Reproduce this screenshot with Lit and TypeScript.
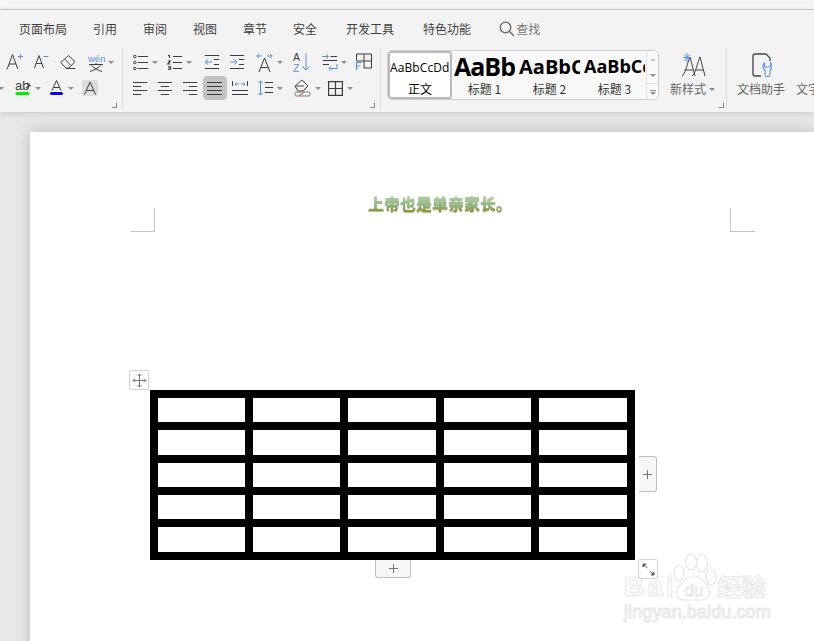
import { LitElement, css, html, svg } from 'lit'
import { customElement } from 'lit/decorators.js'

const BLUE = '#5b92dc'
const INK = '#3c3c3c'

// small helper, every icon is drawn on its own pixel box
const ico = (w: number, h: number, body: unknown) => html`<svg width=${w} height=${h} viewBox="0 0 ${w} ${h}" fill="none" stroke=${INK} stroke-width="1">${body}</svg>`

const lines = (rows: [number, number, number][]) => rows.map(([x1, x2, y]) => svg`<path d="M${x1} ${y}.5H${x2}"/>`)

const icons: Record<string, unknown> = {
	aPlus: ico(17, 20, svg`<path d="M.2 17 5.500 2.500 10.800 17M2 12h7"/><path stroke=${BLUE} d="M11 4.500h5M13.500 2v5"/>`),
	aMinus: ico(15, 20, svg`<path d="M.5 16 5 3.500 9.500 16M2 11.500h6"/><path stroke=${BLUE} d="M9.500 4.500h5"/>`),
	eraser: ico(16, 18, svg`<path stroke="#444" d="M.8 9.500 8.500 2.500l6.500 6-6 6.500H6zM4.500 6l6.500 6.500M6 15.500h9"/>`),
	wen: ico(16, 22, svg`<text x="0" y="11" font-size="9.500" font-family="Liberation Sans" fill=${BLUE} stroke="none">wén</text><path d="M1 13.500h14M8 12v1.500M3.500 14.500c3 3 7 5 10.500 6M12.500 14.500c-3 3-7 5-10.500 6"/>`),
	ab: ico(16, 19, svg`<text x="0" y="11" font-size="13" font-family="Liberation Sans" fill=${INK} stroke="none">ab</text><path stroke-width="1.200" d="m11 9 4-2.500-3-2.500"/><path stroke="#00ee00" stroke-width="3" stroke-linecap="round" d="M2 14.500h11"/>`),
	aBlue: ico(15, 20, svg`<path d="M3 12.500 7.500 2.500l4.500 10M4.500 9.500h6"/><path stroke="#0000e0" stroke-width="3" stroke-linecap="round" d="M2.500 15.500h10"/>`),
	aBox: ico(16, 16, svg`<rect width="16" height="16" rx="2" fill="#dcdcdc" stroke="none"/><path stroke="#444" d="M2.500 14.500 8 2l5.500 12.500M4.300 10.500h7.400"/>`),
	bullets: ico(15, 16, svg`<circle cx="1.800" cy="2.500" r="1.300"/><circle cx="1.800" cy="8.500" r="1.300"/><circle cx="1.800" cy="14.500" r="1.300"/>${lines([[5, 15, 2], [5, 15, 8], [5, 15, 14]])}`),
	numbered: ico(15, 16, svg`<path stroke-width="1.200" d="M1 1.500h1.500v2.500M.8 7h2.400l-2.400 3h2.600M1 12.800h2.500v2.400H1"/>${lines([[6, 15, 2], [6, 15, 8], [6, 15, 14]])}`),
	outdent: ico(15, 14, svg`<path stroke=${BLUE} d="M8 7H1m3-2.500L1.300 7 4 9.500"/>${lines([[1, 15, 0], [10, 15, 4], [10, 15, 9], [1, 15, 13]])}`),
	indent: ico(15, 14, svg`<path stroke=${BLUE} d="M1 7h7M5.500 4.500 8 7 5.500 9.500"/>${lines([[1, 15, 0], [10, 15, 4], [10, 15, 9], [1, 15, 13]])}`),
	aWide: ico(17, 21, svg`<path d="M3 20 8.500 6 14 20M5 15.500h7"/><path stroke=${BLUE} d="M1 4h5M3 2 .8 4 3 6M11 4h5M14 2l2.200 2L14 6"/>`),
	sort: ico(17, 20, svg`<text x="0" y="9" font-size="10.500" font-family="Liberation Sans" fill=${INK} stroke="none">A</text><text x="0" y="20" font-size="10.500" font-family="Liberation Sans" fill=${BLUE} stroke="none">Z</text><path stroke=${BLUE} d="M13 1v17m-3.500-3.500L13 18l3.500-3.500"/>`),
	lineBreak: ico(15, 18, svg`<path stroke=${BLUE} d="M0 3.500h6M4.500 1.500l2 2-2 2M15 11v4.500H7M9 13.500l-2 2 2 2"/><path d="M8.500 3.500H15M1 7.500h14M1 11.500h6"/>`),
	tableText: ico(17, 18, svg`<path d="M1.500 7.500v-6.500h15v14H9M9 1v14M1.500 8h15"/><path stroke=${BLUE} stroke-width="1.200" d="M1.500 17V9.500h5M1.500 13h4"/>`),
	left: ico(15, 14, svg`${lines([[1, 15, 1], [1, 9, 5], [1, 15, 9], [1, 9, 13]])}`),
	center: ico(15, 14, svg`${lines([[1, 15, 1], [4, 12, 5], [1, 15, 9], [4, 12, 13]])}`),
	right: ico(15, 14, svg`${lines([[1, 15, 1], [7, 15, 5], [1, 15, 9], [7, 15, 13]])}`),
	justify: ico(16, 14, svg`${lines([[0, 15, 1], [0, 15, 5], [0, 15, 9], [0, 15, 13]])}`),
	distribute: ico(16, 14, svg`<path d="M.5 0v5M15.500 0v5M0 13.500h16M0 9.500h16"/><path stroke=${BLUE} d="M3 3h4M4.500 1.500 3 3l1.500 1.500M9 3h4M11.500 1.500 13 3l-1.500 1.500"/>`),
	spacing: ico(15, 16, svg`<path stroke=${BLUE} d="M2.500 1v14M.5 3l2-2 2 2M.5 13l2 2 2-2"/>${lines([[7, 15, 2], [7, 15, 7], [7, 15, 12]])}`),
	fill: ico(17, 18, svg`<path stroke="#444" d="m1 7 7-6 6 6-5 5H4zM1 7h9"/><rect x="1" y="13" width="15" height="4" rx="1.500" stroke="#777"/><path stroke="#e05555" d="m5 16.500 5-3"/>`),
	borders: ico(15, 15, svg`<path stroke-width="1.200" d="M.6.6h13.800v13.800H.6zM7.500.6v13.800M.6 7.500h13.800"/>`),
}

const Row1 = [
	[[7, 'aPlus', 17], [10, 'aMinus', 15], [11, 'eraser', 16], [12, 'wen', 16, 1]],
	[[10, 'bullets', 15, 1], [9, 'numbered', 15, 1], [12, 'outdent', 15], [10, 'indent', 15], [12, 'aWide', 17, 1], [10, 'sort', 17], [12, 'lineBreak', 15, 1], [8, 'tableText', 17]],
]
const Row2 = [
	[[11, 'ab', 16, 1], [8, 'aBlue', 15, 1], [8, 'aBox', 16]],
	[[9, 'left', 15], [10, 'center', 15], [10, 'right', 15], [6, 'justify', 16, 2], [5, 'distribute', 16], [10, 'spacing', 15, 1], [11, 'fill', 17, 1], [7, 'borders', 15, 1]],
]

const tool = (t: (string | number)[]) => html`<span class="tool ${t[3] === 2 ? 'on' : ''}" style="margin-left:${t[0]}px">
	${icons[t[1] as string]}${t[3] === 1 ? html`<i class="arrow"></i>` : ''}
</span>`

const plus = html`<svg width="9" height="9" viewBox="0 0 9 9" stroke="#777" fill="none"><path d="M4.500 0v9M0 4.500h9"/></svg>`

const tabs = ['页面布局', '引用', '审阅', '视图', '章节', '安全', '开发工具', '特色功能']

@customElement('app-root')
export class AppRoot extends LitElement {
	render() {
		return html`
		<div class="top"></div>
		<div class="ribbon">
			<nav class="tabs">
				${tabs.map((t, i) => html`<span class=${i > 5 ? 'tab wide' : 'tab'}>${t}</span>`)}
				<span class="find">
					<svg width="16" height="16" viewBox="0 0 16 16" fill="none" stroke="#666" stroke-width="1.300"><circle cx="6.500" cy="6.500" r="5.300"/><path d="m10.500 10.500 4.500 4.500"/></svg>
					查找
				</span>
			</nav>
			<div class="tools">
				<section class="group one">
					<div class="row">${Row1[0].map(tool)}</div>
					<div class="row"><i class="arrow first"></i>${Row2[0].map(tool)}</div>
					<i class="launch"></i>
				</section>
				<section class="group two">
					<div class="row">${Row1[1].map(tool)}</div>
					<div class="row">${Row2[1].map(tool)}</div>
					<i class="launch"></i>
				</section>
				<div class="gallery">
					<div class="style sel"><b class="p0">AaBbCcDd</b><span class="body">正文</span></div>
					<div class="style s1"><b class="p1">AaBb</b><span>标题 1</span></div>
					<div class="style s2"><b class="p2">AaBbC</b><span>标题 2</span></div>
					<div class="style s3"><b class="p3">AaBbCc</b><span>标题 3</span></div>
					<div class="scroll">
						<span class="up"></span><span class="down"></span><span class="more"></span>
					</div>
				</div>
				<section class="big newstyle">
					<svg width="28" height="26" viewBox="0 0 28 26" fill="none" stroke="#444">
						<path d="M3 26c3-1 5-12 8-19l5 19M5.500 20h8.500M13 26c3-1 5-12 8-19l5 19M16 20h8.500"/>
						<path stroke=${BLUE} d="M8 3v9M4 7.500h8M5 4.500l6 6M11 4.500l-6 6"/>
					</svg>
					<span>新样式<i class="arrow tiny"></i></span>
					<i class="launch"></i>
				</section>
				<section class="big helper">
					<svg width="22" height="24" viewBox="0 0 22 24" fill="none" stroke="#444" stroke-width="1.300">
						<path d="M11 23H5q-2 0-2-2V3q0-2 2-2h11l4 4v3"/>
						<path stroke=${BLUE} stroke-width="1.100" d="M14.500 10c-2 1-2.500 5 .5 7v5c0 2 5 2 5 0v-5c3-2 2.500-6 .5-7v4h-6z"/>
					</svg>
					<span>文档助手</span>
				</section>
				<span class="cut">文字</span>
			</div>
		</div>
		<main class="canvas">
			<article class="paper">
				<h1>上帝也是单亲家长。</h1>
				<i class="mark ml"></i><i class="mark mr"></i>
				<span class="handle move">
					<svg width="15" height="15" viewBox="0 0 15 15" fill="none" stroke="#777"><path d="M7.500 1v13M1 7.500h13M5.500 3l2-2 2 2M5.500 12l2 2 2-2M3 5.500l-2 2 2 2M12 5.500l2 2-2 2"/></svg>
				</span>
				<div class="table">
					${Array.from({ length: 25 }, () => html`<div class="cell"></div>`)}
				</div>
				<span class="add side">${plus}</span>
				<span class="add under">${plus}</span>
				<span class="handle resize">
					<svg width="15" height="15" viewBox="0 0 15 15" fill="#555" stroke="#666"><path d="M2.500 2.500l4 3.500M2 2h3L2 5zM12.500 12.500 8.500 9M13 13h-3l3-3z"/></svg>
				</span>
				<div class="mark-wm">
					<svg class="paw" width="44" height="48" viewBox="0 0 44 48" fill="#fff" stroke="#e4e4e4" stroke-width="1.100">
						<ellipse cx="6" cy="20" rx="5" ry="8"/><ellipse cx="18" cy="9" rx="5.500" ry="8"/><ellipse cx="29" cy="10" rx="5.500" ry="9"/><ellipse cx="38" cy="24" rx="5" ry="8"/>
						<path d="M21 23c5 0 8 3 12 8 6 7 4 16-5 16H12C3 47 1 38 7 32c5-4 7-9 14-9z"/>
					</svg>
					<div class="wm1"><span class="bai">Bai</span><span class="du">du</span><span class="jy">经验</span></div>
					<div class="wm2">jingyan.baidu.com</div>
				</div>
			</article>
		</main>
		`
	}

	static styles = css`
	:host {
		display: block;
		width: 814px;
		height: 641px;
		overflow: hidden;
		font-family: "Noto Sans CJK SC", "Liberation Sans", sans-serif;
		font-size: 12px;
		color: #444;
		background: #e7e7e7;
	}

	.top {
		height: 9px;
		background: #f5f6f8;
		border-bottom: 1px solid #c9c9d0;
	}

	.ribbon {
		height: 102px;
		background: #f3f3f3;
		box-shadow: 0 1px 6px rgba(0, 0, 0, 0.14);
		position: relative;
		z-index: 1;
	}

	.tabs {
		display: flex;
		gap: 26px;
		height: 38px;
		padding: 0 0 0 19px;
		align-items: center;
		line-height: 38px;
	}

	.tab { color: #3f3f3f; }
	.tab.wide { margin-left: 3px; }

	.find {
		display: flex;
		align-items: center;
		gap: 1px;
		margin-left: 2px;
		color: #777;
	}

	.tools {
		display: flex;
		height: 62px;
		align-items: stretch;
		overflow: hidden;
	}

	.group {
		position: relative;
		flex: none;
		border-right: 1px solid #dcdcdc;
		height: 62px;
		box-sizing: border-box;
		display: flex;
		flex-direction: column;
	}

	.group.one { width: 123px; }
	.group.two { width: 258px; }

	.row {
		display: flex;
		height: 26px;
		align-items: center;
	}

	.row:first-child { margin-top: 1px; }

	.tool {
		display: inline-flex;
		align-items: center;
		flex: none;
	}

	.tool svg { overflow: visible; }

	.tool.on {
		background: #c4c4c4;
		border-radius: 4px;
		padding: 5px 4px;
	}

	.arrow {
		display: inline-block;
		width: 0;
		height: 0;
		border: 3px solid transparent;
		border-top: 3px solid #8c8c8c;
		border-bottom: 0;
		margin-left: 4px;
		flex: none;
	}

	.arrow.first { margin-left: -2px; }
	.arrow.tiny { margin-left: 3px; vertical-align: 3px; }

	.launch {
		position: absolute;
		right: 5px;
		bottom: 2px;
		width: 4px;
		height: 4px;
		border-right: 1px solid #888;
		border-bottom: 1px solid #888;
	}

	.gallery {
		display: flex;
		position: relative;
		flex: none;
		width: 270px;
		height: 48px;
		margin: 2px 0 0 6px;
		background: #f8f8f8;
		border: 1px solid #cecece;
		border-radius: 5px;
		overflow: hidden;
	}

	.style {
		width: 65px;
		flex: none;
		display: flex;
		flex-direction: column;
		align-items: center;
		overflow: hidden;
		color: #333;
		line-height: 16px;
		white-space: nowrap;
	}

	.style b {
		display: block;
		height: 31px;
		width: 61px;
		overflow: hidden;
		line-height: 31px;
		color: #000;
		font-family: "Open Sans", "Liberation Sans", sans-serif;
	}

	.style.sel {
		width: 60px;
		background: #fff;
		border: 2px solid #b9b9b9;
		border-radius: 3px;
		color: #000;
	}

	.style.sel b { height: 29px; line-height: 29px; }
	.style span { margin-top: -1px; }
	.p0 { font-size: 12px; font-weight: 400; width: 60px !important; letter-spacing: 0.1px; }
	.p1 { font-size: 25px; font-weight: 700; letter-spacing: -1px; }
	.p2 { font-size: 20px; font-weight: 700; }
	.p3 { font-size: 18px; font-weight: 700; }

	.scroll {
		position: absolute;
		right: 0;
		top: 0;
		bottom: 0;
		width: 11px;
		display: flex;
		flex-direction: column;
		border-left: 1px solid #e2e2e2;
		background: #fafafa;
	}

	.scroll span {
		flex: none;
		height: 16px;
		display: flex;
		align-items: center;
		justify-content: center;
	}

	.scroll .down { border-bottom: 1px solid #e2e2e2; }

	.scroll span::after {
		content: "";
		border: 3px solid transparent;
		border-top: 3px solid #8c8c8c;
		border-bottom: 0;
	}

	.scroll .up::after {
		border-top: 0;
		border-bottom: 3px solid #c4c4c4;
	}

	.scroll .more {
		flex-direction: column;
		gap: 1px;
	}

	.scroll .more::before {
		content: "";
		width: 6px;
		border-top: 1px solid #8c8c8c;
	}

	.big {
		position: relative;
		display: flex;
		flex-direction: column;
		align-items: center;
		flex: none;
		height: 62px;
		box-sizing: border-box;
		color: #666;
		line-height: 16px;
		white-space: nowrap;
	}

	.newstyle {
		width: 68px;
		border-right: 1px solid #dcdcdc;
	}

	.newstyle svg { margin: 2px 0 5px; }
	.newstyle .launch { right: 2px; }

	.helper {
		width: 60px;
		margin-left: 4px;
	}

	.helper svg { margin: 5px 0 4px; }

	.cut {
		flex: none;
		margin: 33px 0 0 5px;
		height: 16px;
		line-height: 16px;
		color: #666;
		white-space: nowrap;
	}

	.canvas {
		padding: 20px 0 0 30px;
		height: 529px;
		box-sizing: border-box;
	}

	.paper {
		position: relative;
		width: 784px;
		height: 560px;
		background: #fff;
		box-shadow: 0 0 14px rgba(0, 0, 0, 0.2);
		padding: 60px 0 0 0;
		box-sizing: border-box;
	}

	h1 {
		margin: 0 0 0 338px;
		font-size: 16px;
		line-height: 22px;
		font-weight: 900;
		color: transparent;
		background: linear-gradient(#b2d0a8 20%, #8db57f 60%, #86902f 95%);
		-webkit-background-clip: text;
		background-clip: text;
		width: 150px;
		white-space: nowrap;
		filter: drop-shadow(0 1px 0.5px rgba(120, 140, 60, 0.55));
	}

	.mark {
		position: absolute;
		top: 76px;
		height: 23px;
		border-bottom: 1px solid #c4c4c4;
	}

	.ml { left: 101px; width: 23px; border-right: 1px solid #c4c4c4; }
	.mr { left: 700px; width: 24px; border-left: 1px solid #c4c4c4; }

	.table {
		position: absolute;
		left: 120px;
		top: 258px;
		width: 485px;
		height: 170px;
		box-sizing: border-box;
		display: grid;
		grid-template-columns: 87px 87px 88px 87px 88px;
		grid-template-rows: 24px 25px 24px 24px 25px;
		gap: 8px;
		padding: 8px;
		background: #000;
	}

	.cell { background: #fff; }

	.handle {
		position: absolute;
		display: flex;
		align-items: center;
		justify-content: center;
		width: 20px;
		height: 20px;
		background: #fff;
		border: 1px solid #d4d4d4;
		border-radius: 2px;
		box-sizing: border-box;
	}

	.move { left: 99px; top: 238px; }
	.resize { left: 608px; top: 427px; z-index: 1; background: transparent; }

	.add {
		position: absolute;
		display: flex;
		align-items: center;
		justify-content: center;
		background: #f7f7f7;
		border: 1px solid #bdbdbd;
		box-sizing: border-box;
	}

	.side {
		left: 609px;
		top: 324px;
		width: 18px;
		height: 36px;
		border-left: 0;
		border-radius: 0 3px 3px 0;
	}

	.under {
		left: 345px;
		top: 428px;
		width: 36px;
		height: 18px;
		border-top: 0;
		border-radius: 0 0 3px 3px;
	}

	.mark-wm {
		position: absolute;
		left: 594px;
		top: 422px;
		width: 150px;
		height: 80px;
		color: #fff;
		-webkit-text-stroke: 1px #e6e6e6;
		font-family: "Liberation Sans", sans-serif;
		white-space: nowrap;
	}

	.paw {
		position: absolute;
		left: 49px;
		top: -1px;
	}

	.wm1 {
		position: absolute;
		left: 0;
		top: 15px;
		display: flex;
		align-items: baseline;
		font-size: 28px;
		font-weight: 700;
		line-height: 34px;
		letter-spacing: 3px;
	}

	.du {
		position: relative;
		font-size: 17px;
		margin-left: 8px;
		font-weight: 400;
		letter-spacing: 0;
	}

	.jy {
		font-family: "Noto Sans CJK SC", sans-serif;
		font-size: 24px;
		margin-left: 14px;
		letter-spacing: 0;
	}

	.wm2 {
		position: absolute;
		left: 0;
		top: 47px;
		font-size: 18px;
		line-height: 22px;
		letter-spacing: 0.1px;
	}
	`
}
